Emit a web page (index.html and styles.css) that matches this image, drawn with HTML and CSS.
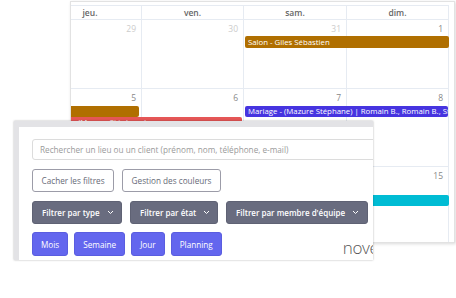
FILE: index.html
```html
<!DOCTYPE html>
<html lang="fr">
<head>
    <meta charset="UTF-8">
    <meta name="viewport" content="width=device-width, initial-scale=1.0">
    <title>Planning - filtres</title>
    <link rel="stylesheet" href="styles.css">
</head>
<body>
    <div class="calendar-card">
        <div class="calendar">
            <div class="cal-head">
                <div class="head-cell">jeu.</div>
                <div class="head-cell">ven.</div>
                <div class="head-cell">sam.</div>
                <div class="head-cell">dim.</div>
            </div>

            <div class="week week-1">
                <div class="day other c1">29</div>
                <div class="day other c2">30</div>
                <div class="day other c3">31</div>
                <div class="day c4">1</div>
                <div class="ev ev-salon lane-1">Salon - Giles Sébastien</div>
            </div>

            <div class="week week-2">
                <div class="day c1">5</div>
                <div class="day c2">6</div>
                <div class="day c3">7</div>
                <div class="day c4">8</div>
                <div class="ev ev-orange lane-1"></div>
                <div class="ev ev-red lane-2">Mariage - (Mazure Stéphane)</div>
                <div class="ev ev-blue lane-1">Mariage - (Mazure Stéphane) | Romain B., Romain B., Stéphanie L.</div>
            </div>

            <div class="week week-3">
                <div class="day c1">12</div>
                <div class="day c2">13</div>
                <div class="day c3">14</div>
                <div class="day c4">15</div>
                <div class="ev ev-cyan lane-2"></div>
            </div>
        </div>
    </div>

    <div class="filter-panel">
        <input class="search" type="text" placeholder="Rechercher un lieu ou un client (prénom, nom, téléphone, e-mail)">

        <div class="btn-row">
            <button class="btn btn-outline">Cacher les filtres</button>
            <button class="btn btn-outline">Gestion des couleurs</button>
        </div>

        <div class="btn-row">
            <button class="btn btn-filter by-type">Filtrer par type
                <svg class="chev" width="7" height="5" viewBox="0 0 7 5"><path d="M1 1 L3.5 3.5 L6 1" fill="none" stroke="#fff" stroke-width="1"/></svg>
            </button>
            <button class="btn btn-filter by-state">Filtrer par état
                <svg class="chev" width="7" height="5" viewBox="0 0 7 5"><path d="M1 1 L3.5 3.5 L6 1" fill="none" stroke="#fff" stroke-width="1"/></svg>
            </button>
            <button class="btn btn-filter by-member">Filtrer par membre d'équipe
                <svg class="chev" width="7" height="5" viewBox="0 0 7 5"><path d="M1 1 L3.5 3.5 L6 1" fill="none" stroke="#fff" stroke-width="1"/></svg>
            </button>
        </div>

        <div class="btn-row view-row">
            <button class="btn btn-view">Mois</button>
            <button class="btn btn-view">Semaine</button>
            <button class="btn btn-view">Jour</button>
            <button class="btn btn-view">Planning</button>
            <span class="month-title">nove</span>
        </div>
    </div>
</body>
</html>
```

FILE: styles.css
```css
* {
    box-sizing: border-box;
}
body {
    margin: 0;
    width: 456px;
    height: 298px;
    overflow: hidden;
    background: #fff;
    font-family: "Open Sans", Arial, sans-serif;
    position: relative;
}

/* calendar screenshot in the back */
.calendar-card {
    margin: 1px 0 0 70px;
    width: 385px;
    height: 242px;
    padding-top: 3px;
    border: 1px solid #e2e2e2;
    box-shadow: 1px 1px 3px rgba(0,0,0,0.15);
    overflow: hidden;
    background: #fff;
}
.calendar {
    margin-left: -32px;
    width: 410px;
}
.cal-head,
.week {
    display: grid;
    grid-template-columns: 103px 102px 103px 102px;
    border-bottom: 1px solid #e6ebf2;
}
.cal-head {
    height: 15px;
    border-top: 1px solid #e6ebf2;
}
.head-cell {
    border-right: 1px solid #e6ebf2;
    text-align: center;
    font-size: 8.5px;
    font-weight: 600;
    line-height: 13px;
    color: #666;
}
.week-1 {
    height: 69px;
    grid-template-rows: 16px 12px 1fr;
}
.week-2 {
    height: 78px;
    grid-template-rows: 17px 11px 11px 1fr;
}
.week-3 {
    height: 90px;
    grid-template-rows: 17px 11px 11px 1fr;
}
.day {
    grid-row: 1 / -1;
    border-right: 1px solid #e6ebf2;
    text-align: right;
    padding: 3px 5px 0 0;
    font-size: 8.5px;
    line-height: 11px;
    color: #888;
}
.day.other {
    color: #ccc;
}
.c1 { grid-column: 1; }
.c2 { grid-column: 2; }
.c3 { grid-column: 3; }
.c4 { grid-column: 4; }

.ev {
    color: #fff;
    font-size: 7.8px;
    line-height: 11px;
    padding-left: 3px;
    border-radius: 2px;
    white-space: nowrap;
    overflow: hidden;
}
.lane-1 { grid-row: 2; }
.lane-2 { grid-row: 3; }
.ev-salon {
    grid-column: 3 / 5;
    margin: 0 0 0 1px;
    background: #b06f00;
    line-height: 12px;
}
.ev-orange {
    grid-column: 1;
    margin-right: 3px;
    background: #b06f00;
}
.ev-red {
    grid-column: 1 / 3;
    margin-right: 2px;
    background: #e55656;
}
.ev-blue {
    grid-column: 3 / 5;
    margin: 0 1px;
    background: #4634e0;
}
.ev-cyan {
    grid-column: 3 / 5;
    margin: 0 0 0 1px;
    background: #00bcd4;
}

/* filter panel lying over the calendar */
.filter-panel {
    position: absolute;
    z-index: 2;
    left: 14px;
    top: 121px;
    width: 359px;
    height: 139px;
    padding: 12px 0 0 13px;
    background: #fff;
    border-top: 6px solid #e3e3e6;
    border-left: 5px solid #e3e3e6;
    box-shadow: 0 0 2px rgba(0,0,0,0.3);
    overflow: hidden;
}
.search {
    display: block;
    width: 380px;
    height: 21px;
    padding: 0 7px;
    border: 1px solid #dcdcdc;
    border-radius: 3px;
    font-family: "Open Sans", Arial, sans-serif;
    font-size: 8.2px;
    color: #555;
}
.search::placeholder {
    color: #9a9a9a;
}
.btn-row {
    display: flex;
    gap: 8px;
    margin-top: 9px;
    white-space: nowrap;
}
.btn {
    height: 23px;
    padding: 0 8.5px;
    border-radius: 3px;
    font-family: "Open Sans", Arial, sans-serif;
    font-size: 8.2px;
    display: flex;
    align-items: center;
    flex-shrink: 0;
}
.btn-outline {
    background: #fff;
    border: 1px solid #9c9ca8;
    color: #666a77;
}
.btn-filter {
    padding: 0 0 0 9px;
    background: #696c7f;
    border: 1px solid #5f6274;
    color: #fff;
    font-weight: 600;
    font-size: 8px;
}
.by-type { width: 90px; }
.by-state { width: 88px; }
.by-member { width: 142px; }
.chev {
    margin-left: 7px;
}
.view-row {
    gap: 6px;
    margin-top: 8px;
    align-items: flex-start;
}
.btn-view {
    height: 24px;
    padding: 0 8px;
    background: #6366ee;
    border: 1px solid #5a5de0;
    color: #fff;
    font-size: 8.2px;
}
.month-title {
    margin-left: 115px;
    margin-top: 4px;
    font-size: 17px;
    font-weight: 300;
    color: #555;
    letter-spacing: -0.4px;
}
```
